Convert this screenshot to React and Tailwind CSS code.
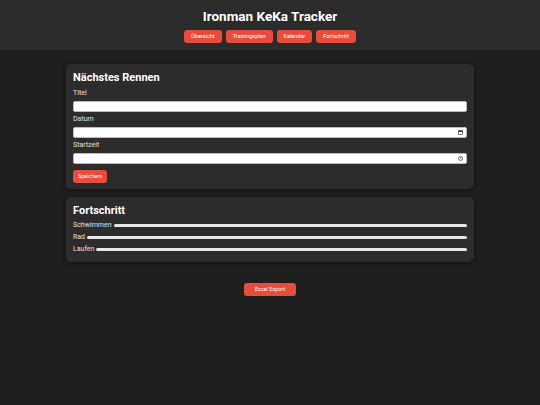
import React from "react";

const navItems = ["Übersicht", "Trainingsplan", "Kalender", "Fortschritt"];

const fields = [
  { label: "Titel", type: "text" },
  { label: "Datum", type: "date" },
  { label: "Startzeit", type: "time" },
];

const bars = ["Schwimmen", "Rad", "Laufen"];

const CalendarIcon = () => (
  <svg viewBox="0 0 10 10" className="w-[5px] h-[5px]">
    <rect x="1" y="1.5" width="8" height="7.5" fill="none" stroke="#222" strokeWidth="1.2" />
    <rect x="1" y="1.5" width="8" height="2.2" fill="#222" />
  </svg>
);

const ClockIcon = () => (
  <svg viewBox="0 0 10 10" className="w-[5px] h-[5px]">
    <circle cx="5" cy="5" r="4" fill="none" stroke="#222" strokeWidth="1.2" />
    <path d="M5 2.6V5l1.6 1.2" fill="none" stroke="#222" strokeWidth="1" />
  </svg>
);

const Button = ({ children, className = "" }) => (
  <button
    className={`block bg-[#e74c3c] text-white text-[5.5px] leading-none rounded-[3px] ${className}`}
  >
    {children}
  </button>
);

export default function App() {
  return (
    <div className="min-h-[405px] bg-[#1f1f1f] font-['Roboto',sans-serif] text-[#e0e0e0]">
      <header className="bg-[#2b2b2b] pt-[8px] pb-[7px] flex flex-col items-center">
        <h1 className="text-[13.5px] leading-[17px] font-bold text-white">
          Ironman KeKa Tracker
        </h1>
        <nav className="mt-[5px] flex gap-[4px]">
          {navItems.map((item) => (
            <Button key={item} className="h-[13px] px-[7px]">
              {item}
            </Button>
          ))}
        </nav>
      </header>

      <main className="w-[408px] mx-auto pt-[14px] flex flex-col">
        <section className="bg-[#2c2c2c] rounded-[5px] px-[7px] pt-[7px] pb-[6px] shadow-[0_1px_4px_rgba(0,0,0,0.4)]">
          <h2 className="text-[11px] leading-[13px] font-bold text-white mb-[5px]">
            Nächstes Rennen
          </h2>
          {fields.map((f) => (
            <div key={f.label} className="mb-[3px]">
              <label className="block text-[7px] leading-[9px] mb-[3px]">{f.label}</label>
              <div className="relative h-[11px] bg-white rounded-[2px] border border-[#bbb]">
                <input type="text" className="block w-full h-full bg-transparent outline-none" />
                {f.type === "date" && (
                  <span className="absolute right-[3px] top-[2px] flex">
                    <CalendarIcon />
                  </span>
                )}
                {f.type === "time" && (
                  <span className="absolute right-[3px] top-[2px] flex">
                    <ClockIcon />
                  </span>
                )}
              </div>
            </div>
          ))}
          <Button className="mt-[6px] h-[13px] px-[5px]">Speichern</Button>
        </section>

        <section className="mt-[8px] bg-[#2c2c2c] rounded-[5px] px-[7px] pt-[7px] pb-[5px] shadow-[0_1px_4px_rgba(0,0,0,0.4)]">
          <h2 className="text-[11px] leading-[13px] font-bold text-white mb-[4px]">
            Fortschritt
          </h2>
          {bars.map((b) => (
            <div key={b} className="flex items-center gap-[2px] h-[9px] mb-[3px]">
              <span className="text-[7px] leading-[9px]">{b}</span>
              <div className="flex-1 h-[3px] bg-[#e6e6e6] rounded-full" />
            </div>
          ))}
        </section>

        <div className="mt-[21px] flex justify-center">
          <Button className="h-[13px] w-[52px]">Excel Export</Button>
        </div>
      </main>
    </div>
  );
}
